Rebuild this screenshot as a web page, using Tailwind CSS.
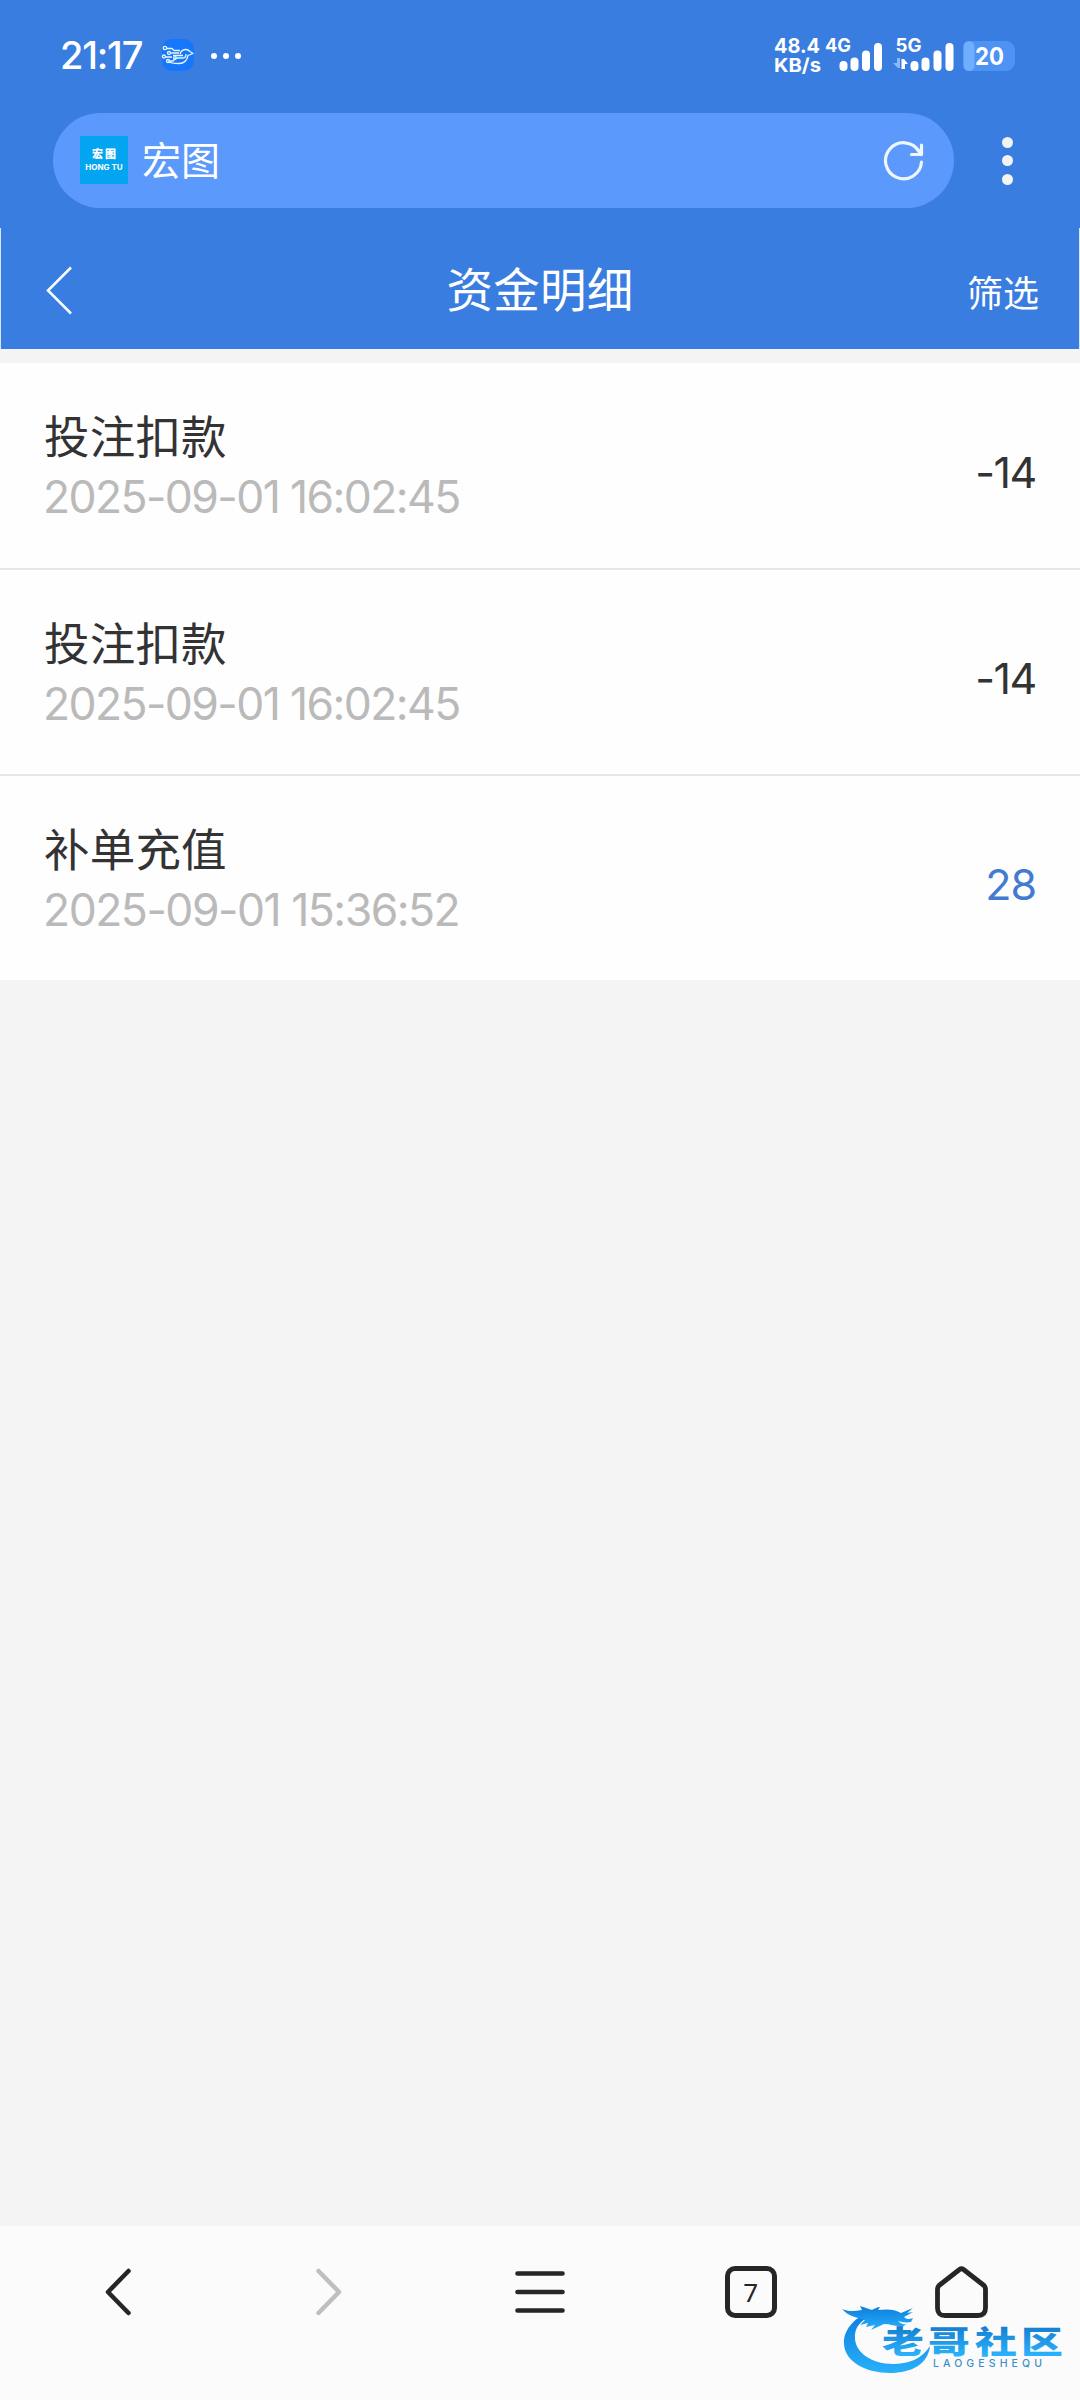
<!DOCTYPE html>
<html lang="zh-CN">
<head>
<meta charset="utf-8">
<title>资金明细</title>
<script src="https://cdn.jsdelivr.net/npm/@tailwindcss/browser@4"></script>
</head>
<body class="w-[1080px] h-[2400px] overflow-hidden flex flex-col bg-[#f4f4f4] font-['Inter','Noto_Sans_CJK_SC',sans-serif]">

<!-- status bar -->
<div class="h-[113px] shrink-0 bg-[#3a7de0] flex justify-between items-start text-white">
  <div class="flex items-center pl-[60px] pt-[31px] h-[79px]">
    <span class="w-[100px] text-[38px] leading-[48px] font-medium tracking-[-1.200px]">21:17</span>
    <svg class="w-[36px] h-[36px]" viewBox="0 0 36 36" fill="none">
      <rect x="2" y="2" width="32" height="32" rx="10" fill="#1677fb"/>
      <g stroke="#e6f6ff" stroke-width="1.3" stroke-linejoin="round">
        <path d="M7 11.500h5l2 2h6M20 17c1-3 3-4.500 6-4.500 2 0 3 1 4 2l3 2-5 2c-1 5-4 8-9 8-4 0-8 0-11-2"/>
        <path d="M11 16h8M13 18.500h10M5 20h7M17 21h6c2 0 3-2 3-4M16 21l-3 3H9"/>
        <circle cx="5" cy="11" r="1.7"/><circle cx="9" cy="16" r="1.5"/><circle cx="4" cy="19.500" r="1.5"/><circle cx="8" cy="24" r="1.5"/><circle cx="15" cy="21" r="1.4"/>
      </g>
    </svg>
    <div class="flex gap-[6px] ml-[15px] pt-px">
      <i class="size-[6px] rounded-full bg-white"></i><i class="size-[6px] rounded-full bg-white"></i><i class="size-[6px] rounded-full bg-white"></i>
    </div>
  </div>
  <svg class="w-[256px] h-[60px] mt-[26px] mr-[54px]" viewBox="770 26 256 60" fill="#fff" font-weight="700">
    <text x="774" y="53" font-size="20.500" textLength="46" lengthAdjust="spacingAndGlyphs">48.4</text>
    <text x="774" y="71.500" font-size="19" textLength="47" lengthAdjust="spacingAndGlyphs">KB/s</text>
    <text x="825" y="52" font-size="18.500" textLength="26" lengthAdjust="spacingAndGlyphs">4G</text>
    <rect x="839.500" y="61" width="8" height="10" rx="4"/><rect x="850.500" y="57.500" width="8" height="13.500" rx="4"/><rect x="862" y="50.500" width="8" height="20.500" rx="4"/><rect x="874" y="43" width="8" height="28" rx="4"/>
    <text x="895.500" y="52" font-size="18.500" textLength="26" lengthAdjust="spacingAndGlyphs">5G</text>
    <path d="M897 58h3v10h-2l-5-5h4z" fill="#8ab8f8"/>
    <path d="M901.500 59h2.500l4 5h-3v5h-3.500z"/>
    <rect x="910.500" y="61" width="8" height="10" rx="4"/><rect x="921.500" y="57.500" width="8" height="13.500" rx="4"/><rect x="933.500" y="50.500" width="8" height="20.500" rx="4"/><rect x="945.500" y="43" width="8" height="28" rx="4"/>
    <rect x="963.500" y="41" width="51.500" height="30" rx="9" fill="#4e92f3"/>
    <rect x="963.500" y="41" width="11" height="30" rx="5.500" fill="#70afff"/>
    <text x="975" y="64.500" font-size="24.500" textLength="29" lengthAdjust="spacingAndGlyphs">20</text>
  </svg>
</div>

<!-- address bar -->
<div class="h-[115px] shrink-0 bg-[#3a7de0] flex items-start pl-[53px]">
  <div class="w-[901px] h-[95px] rounded-full bg-[#5b9afc] flex items-center pl-[27px] pr-[29px] text-white">
    <div class="size-[48px] mb-px bg-[#04a5f0] flex flex-col items-center justify-center">
      <span class="text-[11px] leading-[13px] font-black tracking-[2px] pl-[2px]">宏图</span>
      <span class="text-[8px] leading-[12px] font-bold whitespace-nowrap">HONG TU</span>
    </div>
    <span class="ml-[14px] text-[39px] leading-[48px] flex-1">宏图</span>
    <svg class="w-[42px] h-[42px]" viewBox="883 140 42 42" fill="none" stroke="#eef6ff" stroke-width="3.200" stroke-linecap="round" stroke-linejoin="round">
      <path d="M921.500 162a18 18 0 1 1-2.500-10.500"/>
      <path d="M921.500 145v9.500h-10M918 150l3.500 4.500"/>
    </svg>
  </div>
  <div class="flex flex-col gap-[7.500px] ml-[48px] mt-[23.500px]">
    <i class="size-[11px] rounded-full bg-[#f3f3f3]"></i><i class="size-[11px] rounded-full bg-[#f3f3f3]"></i><i class="size-[11px] rounded-full bg-[#f3f3f3]"></i>
  </div>
</div>

<!-- page header -->
<div class="h-[121px] shrink-0 bg-[#3a7de0] border-x border-[#d5e6fa] flex items-center justify-between pl-[43px] pr-[40px] pt-[3px] text-white">
  <svg class="w-[69px] h-[50px]" viewBox="44 265 69 50" fill="none" stroke="#f4fbff" stroke-width="2.600"><path d="M71 267.500L48 290.500l23 23"/></svg>
  <h1 class="text-[46.500px] leading-[60px] tracking-[.2px]">资金明细</h1>
  <span class="text-[36px] leading-[50px] pt-[7px]">筛选</span>
</div>

<!-- transactions -->
<main class="mt-[14px] bg-[#fefefe] text-[#333]">
  <div class="h-[207px] border-b-2 border-[#e6e6e6] flex items-center justify-between px-[44px] pt-[3px]">
    <div>
      <div class="text-[45.500px] leading-[60px] tracking-[.2px]">投注扣款</div>
      <div class="text-[44.500px] leading-[58px] tracking-[-1.600px] -ml-px text-[#bababa]">2025-09-01 16:02:45</div>
    </div>
    <span class="text-[43px] leading-[58px] tracking-[-1.400px] pt-[9px]">-14</span>
  </div>
  <div class="h-[206px] border-b-2 border-[#e6e6e6] flex items-center justify-between px-[44px] pt-[3px]">
    <div>
      <div class="text-[45.500px] leading-[60px] tracking-[.2px]">投注扣款</div>
      <div class="text-[44.500px] leading-[58px] tracking-[-1.600px] -ml-px text-[#bababa]">2025-09-01 16:02:45</div>
    </div>
    <span class="text-[43px] leading-[58px] tracking-[-1.400px] pt-[8px]">-14</span>
  </div>
  <div class="h-[204px] flex items-center justify-between px-[44px] pt-[3px]">
    <div>
      <div class="text-[45.500px] leading-[60px] tracking-[.2px]">补单充值</div>
      <div class="text-[44.500px] leading-[58px] tracking-[-1.500px] -ml-px text-[#bababa]">2025-09-01 15:36:52</div>
    </div>
    <span class="text-[43px] leading-[58px] tracking-[-1px] pt-[8px] text-[#427bd0]">28</span>
  </div>
</main>

<!-- browser toolbar -->
<nav class="relative mt-auto h-[174px] shrink-0 bg-[#fbfbfb] px-[13px] pt-[36px] grid grid-cols-5 justify-items-center items-start text-[#262626]">
  <svg class="size-[60px]" viewBox="0 0 60 60" fill="none" stroke="currentColor" stroke-width="4.500" stroke-linecap="round" stroke-linejoin="round"><path d="M40.500 9L20 30l20.500 21"/></svg>
  <svg class="size-[60px] text-[#bfbfbf]" viewBox="0 0 60 60" fill="none" stroke="currentColor" stroke-width="4.500" stroke-linecap="round" stroke-linejoin="round"><path d="M19.500 9L40 30 19.500 51"/></svg>
  <svg class="size-[60px]" viewBox="0 0 60 60" fill="none" stroke="currentColor" stroke-width="4.600" stroke-linecap="round"><path d="M7.500 11.500h45M7.500 30h45M7.500 48.500h45"/></svg>
  <div class="size-[52px] mt-[4px] border-[5px] border-current rounded-[10px] flex items-center justify-center text-[26px] leading-none font-['Noto_Sans',sans-serif]">7</div>
  <svg class="size-[60px]" viewBox="0 0 60 60" fill="none" stroke="currentColor" stroke-width="4.800" stroke-linejoin="round"><path d="M27.500 7.500q2-1.500 4 0L52 23.500q1.500 1.500 1.500 4V46q0 7.500-7.500 7.500h-33Q5.500 53.500 5.500 46V27.500q0-2.500 1.500-4z"/></svg>

  <!-- community logo badge -->
  <svg class="absolute left-[836px] top-[70px] w-[240px] h-[86px]" viewBox="836 2296 240 86">
    <defs>
      <linearGradient id="ring" x1="0" y1="0" x2="0" y2="1"><stop offset="0" stop-color="#0b7ddd"/><stop offset="1" stop-color="#29b0fa"/></linearGradient>
      <linearGradient id="ink" x1="0" y1="0" x2="0" y2="1"><stop offset=".15" stop-color="#1478cc"/><stop offset=".85" stop-color="#29b2fb"/></linearGradient>
    </defs>
    <path fill="url(#ring)" d="M872 2311C852 2318 843 2332 844 2344c1 18 22 29 46 29 22 0 38-9 40-27-8 13-22 18-37 18-21 0-37-11-38-25-1-11 5-19 19-25z"/>
    <path fill="url(#ring)" d="M842 2309c7 3 13 2 20 1l-2-4 12 4c2-1 5-3 8-3l-2 3c8-1 17-1 23 3l12-5-6 5 6-1-9 5c3 3 6 2 9 1l-2 4c-5 1-9 0-13-1 3 3 7 4 9 3l-5 3c-7-1-12-3-18-3l-13 6 4-5-9 2 2-4-8 2 5-5c-10-3-17-4-23-11z"/>
    <g fill="url(#ink)" font-family="'Noto Sans CJK SC',sans-serif" font-weight="900">
      <text transform="translate(882 2352.500) scale(1.350 1)" font-size="31">老</text>
      <text transform="translate(928 2352.500) scale(1.350 1)" font-size="31">哥</text>
      <text transform="translate(975 2352.500) scale(1.350 1)" font-size="31">社</text>
      <text transform="translate(1021 2352.500) scale(1.350 1)" font-size="31">区</text>
    </g>
    <text x="933" y="2366.500" font-size="10.500" font-weight="500" fill="#3d8fc9" textLength="109">LAOGESHEQU</text>
  </svg>
</nav>
</body>
</html>
